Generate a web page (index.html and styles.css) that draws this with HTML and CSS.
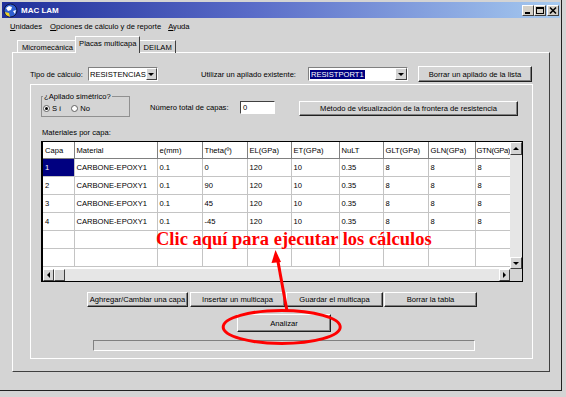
FILE: index.html
```html
<!doctype html>
<html>
<head>
    <meta charset="UTF-8">
    <title>MAC LAM</title>
    <link rel="stylesheet" href="styles.css">
</head>
<body>
<div class="window">
    <div class="titlebar">
        <svg class="app_icon" width="15" height="15" viewBox="0 0 15 15">
            <circle cx="7.5" cy="7.5" r="6.5" fill="#2f5fd0" stroke="#101840"/>
            <path d="M3 5 L6 3 L9 4 L8 7 L5 8 Z" fill="#ffffff"/>
            <path d="M2 9 L6 10 L7 14 L3 12 Z" fill="#f0d020"/>
            <path d="M10 8 L13 7 L12 11 Z" fill="#ffffff"/>
        </svg>
        <span class="title">MAC LAM</span>
        <div class="caption_btns">
            <span class="cbtn"><svg width="10" height="9" viewBox="0 0 10 9"><rect x="2" y="6" width="5" height="2" fill="#000"/></svg></span>
            <span class="cbtn"><svg width="10" height="9" viewBox="0 0 10 9"><rect x="1.5" y="1.5" width="7" height="6" fill="none" stroke="#000"/><rect x="1" y="1" width="8" height="2" fill="#000"/></svg></span>
            <span class="cbtn close"><svg width="10" height="9" viewBox="0 0 10 9"><path d="M2 1.5 L8 7.5 M8 1.5 L2 7.5" stroke="#000" stroke-width="1.6"/></svg></span>
        </div>
    </div>

    <div class="menubar">
        <span class="menu_item menu_first"><u>U</u>nidades</span>
        <span class="menu_item"><u>O</u>pciones de cálculo y de reporte</span>
        <span class="menu_item"><u>A</u>yuda</span>
    </div>

    <div class="tabs">
        <span class="tab tab_first">Micromecánica</span>
        <span class="tab tab_active">Placas multicapa</span>
        <span class="tab">DEILAM</span>
    </div>

    <div class="panel">
        <div class="row_top">
            <span class="lbl_tipo">Tipo de cálculo:</span>
            <div class="combo combo_1">
                <span class="combo_text">RESISTENCIAS</span>
                <span class="drop"><i class="tri_down"></i></span>
            </div>
            <span class="lbl_util">Utilizar un apilado existente:</span>
            <div class="combo combo_2">
                <span class="combo_text"><span class="sel">RESISTPORT1</span></span>
                <span class="drop"><i class="tri_down"></i></span>
            </div>
            <span class="btn btn_borrar_apilado">Borrar un apilado de la lista</span>
        </div>

        <div class="frame">
            <div class="row_mid">
                <fieldset class="group">
                    <legend>¿Apilado simétrico?</legend>
                    <div class="radios">
                        <span class="radio on"></span><span class="radio_lbl si">Sí</span>
                        <span class="radio radio_no"></span><span class="radio_lbl">No</span>
                    </div>
                </fieldset>
                <span class="lbl_num">Número total de capas:</span>
                <span class="textbox">0</span>
                <span class="btn btn_metodo">Método de visualización de la frontera de resistencia</span>
            </div>

            <div class="lbl_mat">Materiales por capa:</div>

            <div class="grid">
                <div class="cells">
                    <table>
                        <colgroup>
                            <col style="width:31px"><col style="width:83px"><col style="width:45px"><col style="width:45px"><col style="width:44px">
                            <col style="width:48px"><col style="width:44px"><col style="width:45px"><col style="width:47px"><col style="width:36px">
                        </colgroup>
                        <thead>
                        <tr>
                            <th>Capa</th><th>Material</th><th>e(mm)</th><th>Theta(º)</th><th>EL(GPa)</th>
                            <th>ET(GPa)</th><th>NuLT</th><th>GLT(GPa)</th><th>GLN(GPa)</th><th class="last">GTN(GPa)</th>
                        </tr>
                        </thead>
                        <tbody>
                        <tr><td class="cur">1</td><td>CARBONE-EPOXY1</td><td>0.1</td><td>0</td><td>120</td><td>10</td><td>0.35</td><td>8</td><td>8</td><td>8</td></tr>
                        <tr><td>2</td><td>CARBONE-EPOXY1</td><td>0.1</td><td>90</td><td>120</td><td>10</td><td>0.35</td><td>8</td><td>8</td><td>8</td></tr>
                        <tr><td>3</td><td>CARBONE-EPOXY1</td><td>0.1</td><td>45</td><td>120</td><td>10</td><td>0.35</td><td>8</td><td>8</td><td>8</td></tr>
                        <tr><td>4</td><td>CARBONE-EPOXY1</td><td>0.1</td><td>-45</td><td>120</td><td>10</td><td>0.35</td><td>8</td><td>8</td><td>8</td></tr>
                        <tr><td></td><td></td><td></td><td></td><td></td><td></td><td></td><td></td><td></td><td></td></tr>
                        <tr><td></td><td></td><td></td><td></td><td></td><td></td><td></td><td></td><td></td><td></td></tr>
                        </tbody>
                    </table>
                </div>
                <div class="vscroll">
                    <span class="sbtn sbtn_up"><i class="tri_up"></i></span>
                    <span class="sbtn sbtn_down"><i class="tri_down"></i></span>
                </div>
                <div class="hscroll">
                    <span class="sbtn sbtn_h"><i class="tri_left"></i></span>
                    <span class="sbtn sbtn_h"></span>
                    <span class="sbtn sbtn_h sbtn_right"><i class="tri_right"></i></span>
                </div>
                <div class="corner"></div>
            </div>

            <div class="row_btns">
                <span class="btn btn_1">Aghregar/Cambiar una capa</span>
                <span class="btn btn_2">Insertar un multicapa</span>
                <span class="btn btn_3">Guardar el multicapa</span>
                <span class="btn btn_4">Borrar la tabla</span>
            </div>

            <span class="btn btn_analizar">Analizar</span>

            <div class="progress"></div>
        </div>
    </div>
</div>

<!-- anotaciones en rojo sobre la captura -->
<div class="note">Clic aquí para ejecutar los cálculos</div>
<svg class="marks" width="566" height="397" viewBox="0 0 566 397">
    <line x1="287" y1="311" x2="277.5" y2="259" stroke="#f00" stroke-width="3"/>
    <polygon points="275.5,250 281,262 271.5,263" fill="#f00"/>
    <ellipse cx="281.7" cy="327" rx="58.5" ry="16.5" fill="none" stroke="#f00" stroke-width="3"/>
</svg>
</body>
</html>
```

FILE: styles.css
```css
body{margin:0;background:#d4d4d4;font-family:"Liberation Sans",Arial,sans-serif;font-size:7.6px;line-height:9px;color:#000;}

/* ventana principal */
.window{width:562px;height:391px;box-sizing:border-box;padding:2px 1px 0 2px;border-right:1px solid #202020;border-bottom:1px solid #202020;}
.titlebar{height:16px;display:flex;align-items:center;background:linear-gradient(to right,#1f2f9a,#5a6cc8 45%,#a6caf0);}
.app_icon{margin-left:1px;}
.title{margin-left:3px;color:#fff;font-weight:bold;font-size:8px;}
.caption_btns{margin-left:auto;margin-right:1px;display:flex;}
.cbtn{width:12px;height:11px;box-sizing:border-box;background:#d4d0c8;border:1px solid;border-color:#fff #404040 #404040 #fff;display:flex;align-items:center;justify-content:center;}
.cbtn.close{margin-left:1px;}

/* menu */
.menubar{height:16px;display:flex;align-items:center;padding-left:8px;}
.menu_item{margin-right:7px;}
.menu_first{margin-right:8px;}

/* pestañas */
.tabs{margin-top:4px;margin-left:15px;height:15px;display:flex;align-items:flex-end;position:relative;z-index:1;margin-bottom:-1px;}
.tab{height:13px;box-sizing:border-box;padding:2px 3px 0 3px;border-top:1px solid #fff;border-right:1px solid #404040;}
.tab_first{border-left:1px solid #fff;padding-left:4px;}
.tab_active{height:17px;padding-top:2px;margin-left:-2px;background:#d4d4d4;border-left:1px solid #fff;}

.panel{margin-left:10px;width:538px;height:320px;box-sizing:border-box;border:1px solid;border-color:#fff #404040 #404040 #fff;padding:13px 0 0 17px;}

/* fila superior */
.row_top{display:flex;align-items:center;height:16px;}
.lbl_tipo{width:58px;}
.lbl_util{margin-left:43px;width:107px;}
.combo{height:14px;box-sizing:border-box;background:#fff;border:1px solid;border-color:#808080 #fff #fff #808080;display:flex;align-items:center;}
.combo_1{width:70px;}
.combo_2{width:100px;}
.combo_text{flex:1;padding-left:1px;white-space:nowrap;}
.sel{background:#000080;color:#fff;padding:0 1px;}
.drop{width:12px;height:12px;box-sizing:border-box;background:#d4d4d4;border:1px solid;border-color:#fff #404040 #404040 #fff;display:flex;align-items:center;justify-content:center;}

.tri_down{width:0;height:0;border-left:3px solid transparent;border-right:3px solid transparent;border-top:3px solid #000;}
.tri_up{width:0;height:0;border-left:3px solid transparent;border-right:3px solid transparent;border-bottom:3px solid #000;}
.tri_left{width:0;height:0;border-top:3px solid transparent;border-bottom:3px solid transparent;border-right:3px solid #000;}
.tri_right{width:0;height:0;border-top:3px solid transparent;border-bottom:3px solid transparent;border-left:3px solid #000;}

.btn{box-sizing:border-box;height:16px;background:#d4d4d4;border:1px solid;border-color:#fff #202020 #202020 #fff;box-shadow:inset -1px -1px 0 #808080;display:flex;align-items:center;justify-content:center;white-space:nowrap;}
.btn_borrar_apilado{margin-left:10px;width:114px;}

/* marco interior */
.frame{margin-top:2px;width:503px;height:275px;box-sizing:border-box;border:1px solid #fff;}
.row_mid{margin-top:7px;margin-left:10px;display:flex;align-items:flex-start;height:25px;}
.group{margin:0;padding:0 1px;width:89px;height:25px;box-sizing:border-box;border:1px solid #909090;}
.group legend{padding:0 1px;margin-left:0;line-height:9px;}
.radios{display:flex;align-items:center;margin-top:3px;}
.radio{width:7px;height:7px;box-sizing:border-box;border-radius:50%;background:#fff;border:1px solid #606060;display:flex;align-items:center;justify-content:center;}
.radio.on::after{content:"";width:3px;height:3px;border-radius:50%;background:#000;}
.radio_lbl{margin-left:2px;}
.radio_lbl.si{letter-spacing:2px;}
.radio_no{margin-left:8px;}
.lbl_num{margin-left:20px;margin-top:11px;width:90px;}
.textbox{margin-top:9px;width:35px;height:13px;box-sizing:border-box;background:#fff;border:1px solid;border-color:#404040 #fff #fff #404040;padding-left:2px;line-height:11px;}
.btn_metodo{margin-top:9px;margin-left:24px;width:219px;height:15px;}

.lbl_mat{margin-top:11px;margin-left:11px;}

/* tabla de materiales */
.grid{margin-top:4px;margin-left:10px;width:482px;height:141px;box-sizing:border-box;border:1px solid #000;border-left-width:2px;display:grid;grid-template-columns:467px 12px;grid-template-rows:127px 12px;background:#fff;}
.cells{overflow:hidden;}
.grid table{border-collapse:collapse;table-layout:fixed;width:468px;}
.grid th,.grid td{padding:0 0 0 2px;text-align:left;font-weight:normal;white-space:nowrap;overflow:hidden;border-right:1px solid #c4c4c4;border-bottom:1px solid #c4c4c4;}
.grid th{border-color:#808080;height:16px;}
.grid th.last{padding-left:1px;letter-spacing:-0.35px;}
.grid td{height:17px;}
.grid td.cur{background:#000080;color:#fff;}
.vscroll{background:#e6e6e6;display:flex;flex-direction:column;justify-content:space-between;}
.hscroll{background:#e6e6e6;display:flex;}
.corner{background:#d4d4d4;}
.sbtn{box-sizing:border-box;background:#d4d4d4;border:1px solid;border-color:#fff #404040 #404040 #fff;display:flex;align-items:center;justify-content:center;}
.sbtn_up{height:13px;}
.sbtn_down{height:12px;}
.sbtn_h{width:11px;}
.sbtn_right{margin-left:auto;}

/* botones inferiores */
.row_btns{margin-top:10px;margin-left:56px;display:flex;}
.row_btns .btn{height:15px;}
.btn_1{width:101px;}
.btn_2{width:95px;margin-left:2px;}
.btn_3{width:97px;margin-left:1px;}
.btn_4{width:93px;margin-left:1px;}
.btn_analizar{margin-top:7px;margin-left:206px;width:94px;height:18px;}
.progress{margin-top:8px;margin-left:62px;width:382px;height:11px;box-sizing:border-box;border:1px solid;border-color:#808080 #fff #fff #808080;}

/* anotaciones */
.note{position:absolute;left:156px;top:230px;font:bold 18.5px/1 "Liberation Serif","Times New Roman",serif;color:#f00;white-space:nowrap;}
.marks{position:absolute;left:0;top:0;pointer-events:none;}
```
